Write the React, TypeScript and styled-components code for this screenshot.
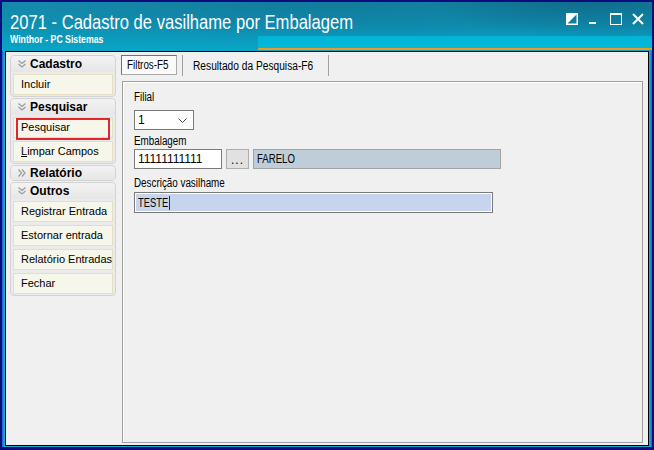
import React from "react";
import styled, { createGlobalStyle } from "styled-components";

const GlobalStyle = createGlobalStyle`
  html, body {
    margin: 0;
    padding: 0;
    background: #0b0b7e;
  }
  body {
    font-family: "Liberation Sans", Arial, sans-serif;
  }
`;

// the captured UI uses a condensed face; squeeze the Arial-metric font to match
const Squeezed = styled.span<{ $sx?: number }>`
  display: inline-block;
  white-space: nowrap;
  transform: scaleX(${(p) => p.$sx ?? 0.82});
  transform-origin: left center;
`;

const Window = styled.div`
  width: 654px;
  height: 450px;
  box-sizing: border-box;
  border: 2px solid #0b0b7e;
  border-bottom-width: 3px;
  display: flex;
  flex-direction: column;
  overflow: hidden;
`;

const TitleBar = styled.div`
  height: 49px;
  flex: none;
  display: flex;
  flex-direction: column;
  padding-left: 8px;
  color: #fff;
  background:
    radial-gradient(ellipse 260px 70px at 600px -10px, rgba(0, 40, 70, 0.35), transparent 70%),
    radial-gradient(ellipse 420px 60px at 330px 0px, rgba(0, 60, 90, 0.18), transparent 70%),
    linear-gradient(180deg, #1689a9 0%, #0f8eb0 45%, #08a6c8 100%);
`;

const TitleRow = styled.div`
  display: flex;
  align-items: flex-start;
  height: 24px;
  margin-top: 8px;
  padding-right: 8px;
`;

const Title = styled.h1`
  margin: 0;
  font-size: 21px;
  line-height: 24px;
  font-weight: normal;
  white-space: nowrap;
  width: 345px;
`;

const Controls = styled.div`
  margin-left: auto;
  margin-top: 3px;
  display: flex;
  gap: 10px;
`;

const ControlIcon = styled.svg`
  width: 12px;
  height: 12px;
  display: block;
`;

const SubRow = styled.div`
  flex: 1;
  display: flex;
  align-items: flex-start;
`;

const Subtitle = styled.div`
  font-size: 10.5px;
  font-weight: bold;
  line-height: 13px;
  margin-top: -1px;
  width: 100px;
`;

const Band = styled.div`
  margin-left: auto;
  margin-top: 2px;
  width: 394px;
  height: 12px;
  background: linear-gradient(180deg, #04b3d4, #00b9da);
  border-bottom: 2px solid #f29a1e;
`;

const Frame = styled.div`
  flex: 1;
  display: flex;
  padding: 0 3px 1px 3px;
  background: linear-gradient(
    90deg,
    #2157c6 0px,
    #19a9d2 2px,
    #19a9d2 calc(100% - 2px),
    #2157c6 100%
  );
`;

const Content = styled.div`
  flex: 1;
  display: flex;
  border: 1px solid #000;
  background: #f0f0f0;
  min-height: 0;
`;

const Sidebar = styled.div`
  width: 106px;
  flex: none;
  padding: 3px 0 0 4px;
  display: flex;
  flex-direction: column;
  gap: 1px;
`;

const Group = styled.div`
  border: 1px solid #d3d3d3;
  border-radius: 4px;
  background: #ebebeb;
  padding: 0 2px 1px 2px;
  display: flex;
  flex-direction: column;
  gap: 3px;
`;

const GroupHeader = styled.div<{ $open: boolean }>`
  height: ${(p) => (p.$open ? 16 : 14)}px;
  margin: 0 -2px -1px;
  padding-left: 7px;
  display: flex;
  align-items: center;
  gap: 4px;
  font-size: 12px;
  font-weight: bold;
  color: #000;
  border-radius: 4px 4px 0 0;
  background: linear-gradient(180deg, #f3f3f3, #e6e6e6);
`;

const SideButton = styled.div<{ $marked?: boolean }>`
  position: relative;
  height: 21px;
  box-sizing: border-box;
  border: 1px solid #e4dfc2;
  background: #f7f6ea;
  font-size: 11px;
  line-height: 19px;
  padding-left: 7px;
  color: #000;
  white-space: nowrap;

  &::after {
    content: "";
    display: ${(p) => (p.$marked ? "block" : "none")};
    position: absolute;
    left: 2px;
    right: 2px;
    top: 0;
    bottom: -3px;
    border: 2px solid #e3262b;
  }
`;

const Underlined = styled.span`
  text-decoration: underline;
`;

const Main = styled.div`
  flex: 1;
  display: flex;
  flex-direction: column;
  padding: 3px 5px 2px 5px;
  min-width: 0;
`;

const Tabs = styled.div`
  display: flex;
  height: 21px;
  align-items: stretch;
  font-size: 12px;
`;

const Tab = styled.div<{ $active?: boolean }>`
  box-sizing: border-box;
  display: flex;
  align-items: center;
  overflow: hidden;
  ${(p) =>
    p.$active
      ? `
    width: 56px;
    height: 20px;
    padding-left: 5px;
    border: 1px solid #a8a8a8;
    border-top-color: #707070;
    border-left-color: #707070;
    background: #fafafa;
  `
      : `
    width: 147px;
    margin-left: 5px;
    padding-left: 10px;
    border-left: 1px solid #a0a0a0;
    border-right: 1px solid #a0a0a0;
  `}
`;

const Panel = styled.div`
  flex: 1;
  margin: 5px 0 0 1px;
  border: 1px solid #a0a0a0;
  box-shadow: inset 1px 1px 0 #fff;
  padding: 8px 0 0 11px;
  display: flex;
  flex-direction: column;
  align-items: flex-start;
`;

const Label = styled.div<{ $gap: number }>`
  font-size: 12px;
  line-height: 14px;
  height: 14px;
  margin-top: ${(p) => p.$gap}px;
  color: #000;
`;

const FieldRow = styled.div<{ $gap: number }>`
  display: flex;
  gap: 4px;
  margin-top: ${(p) => p.$gap}px;
`;

const Field = styled.div<{ $w: number; $h: number; $tone?: "white" | "grey" | "blue" }>`
  width: ${(p) => p.$w}px;
  height: ${(p) => p.$h}px;
  box-sizing: border-box;
  display: flex;
  align-items: center;
  padding-left: 3px;
  font-size: 12px;
  color: #000;
  overflow: hidden;
  border: 1px solid ${(p) => (p.$tone === "grey" ? "#a3a3a3" : "#7a7a7a")};
  background: ${(p) =>
    p.$tone === "grey" ? "#bfcdd9" : p.$tone === "blue" ? "#c6d4ee" : "#fff"};
  ${(p) => (p.$tone === "blue" ? "box-shadow: inset 0 0 0 1px #fff;" : "")}
`;

const Combo = styled(Field)`
  justify-content: space-between;
  padding-right: 6px;
`;

const DotsButton = styled.div`
  width: 23px;
  height: 20px;
  box-sizing: border-box;
  border: 1px solid #adadad;
  background: #e1e1e1;
  font-size: 12px;
  line-height: 20px;
  text-align: center;
  letter-spacing: 1px;
`;

const Caret = styled.span`
  display: inline-block;
  width: 1.3px;
  height: 14px;
  vertical-align: -3px;
  background: #000;
  margin-left: 1px;
`;

const Chevrons = ({ right }: { right?: boolean }) => (
  <svg width="8" height="8" viewBox="0 0 8 8" style={{ transform: right ? "rotate(-90deg)" : undefined }}>
    <path d="M0.5 0.5 L4 3.5 L7.5 0.5 M0.5 4 L4 7 L7.5 4" fill="none" stroke="#9c9c9c" strokeWidth="1.2" />
  </svg>
);

const groups = [
  { title: "Cadastro", open: true, items: ["Incluir"] },
  { title: "Pesquisar", open: true, items: ["Pesquisar", "Limpar Campos"] },
  { title: "Relatório", open: false, items: [] as string[] },
  {
    title: "Outros",
    open: true,
    items: ["Registrar Entrada", "Estornar entrada", "Relatório Entradas", "Fechar"],
  },
];

export default function App() {
  return (
    <>
      <GlobalStyle />
      <Window>
        <TitleBar>
          <TitleRow>
            <Title>
              <Squeezed $sx={0.79}>2071 - Cadastro de vasilhame por Embalagem</Squeezed>
            </Title>
            <Controls>
              <ControlIcon viewBox="0 0 12 12">
                <rect x="0.75" y="0.75" width="10.5" height="10.5" fill="none" stroke="#fff" strokeWidth="1.5" />
                <path d="M0 0 H12 L0 12 Z" fill="#fff" />
              </ControlIcon>
              <ControlIcon viewBox="0 0 12 12">
                <rect x="1" y="9" width="7" height="2" fill="#fff" />
              </ControlIcon>
              <ControlIcon viewBox="0 0 12 12">
                <rect x="0.5" y="0.5" width="11" height="11" fill="none" stroke="#fff" strokeWidth="1" />
                <rect x="0" y="0" width="12" height="2" fill="#fff" />
              </ControlIcon>
              <ControlIcon viewBox="0 0 12 12">
                <path d="M1 1 L11 11 M11 1 L1 11" stroke="#fff" strokeWidth="2" />
              </ControlIcon>
            </Controls>
          </TitleRow>
          <SubRow>
            <Subtitle>
              <Squeezed $sx={0.83}>Winthor - PC Sistemas</Squeezed>
            </Subtitle>
            <Band />
          </SubRow>
        </TitleBar>
        <Frame>
          <Content>
            <Sidebar>
              {groups.map((g) => (
                <Group key={g.title}>
                  <GroupHeader $open={g.open}>
                    <Chevrons right={!g.open} />
                    {g.title}
                  </GroupHeader>
                  {g.items.map((item) => (
                    <SideButton key={item} $marked={item === "Pesquisar"}>
                      {item === "Limpar Campos" ? (
                        <>
                          <Underlined>L</Underlined>impar Campos
                        </>
                      ) : (
                        item
                      )}
                    </SideButton>
                  ))}
                </Group>
              ))}
            </Sidebar>
            <Main>
              <Tabs>
                <Tab $active>
                  <Squeezed>Filtros-F5</Squeezed>
                </Tab>
                <Tab>
                  <Squeezed $sx={0.85}>Resultado da Pesquisa-F6</Squeezed>
                </Tab>
              </Tabs>
              <Panel>
                <Label $gap={0}>
                  <Squeezed>Filial</Squeezed>
                </Label>
                <FieldRow $gap={6}>
                  <Combo $w={60} $h={20}>
                    1
                    <svg width="9" height="5" viewBox="0 0 9 5">
                      <path d="M0.5 0.5 L4.5 4.5 L8.5 0.5" fill="none" stroke="#444" strokeWidth="1" />
                    </svg>
                  </Combo>
                </FieldRow>
                <Label $gap={4}>
                  <Squeezed>Embalagem</Squeezed>
                </Label>
                <FieldRow $gap={1}>
                  <Field $w={88} $h={20}>11111111111</Field>
                  <DotsButton>...</DotsButton>
                  <Field $w={248} $h={20} $tone="grey">
                    <Squeezed $sx={0.8}>FARELO</Squeezed>
                  </Field>
                </FieldRow>
                <Label $gap={7}>
                  <Squeezed>Descrição vasilhame</Squeezed>
                </Label>
                <FieldRow $gap={2}>
                  <Field $w={359} $h={21} $tone="blue">
                    <Squeezed $sx={0.78}>
                      TESTE
                      <Caret />
                    </Squeezed>
                  </Field>
                </FieldRow>
              </Panel>
            </Main>
          </Content>
        </Frame>
      </Window>
    </>
  );
}
